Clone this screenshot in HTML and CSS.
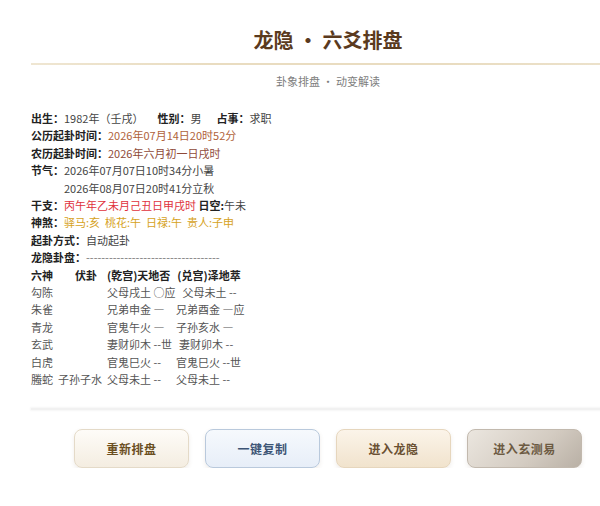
FILE: index.html
```html
<!DOCTYPE html>
<html lang="zh-CN">
<head>
<meta charset="utf-8">
<title>龙隐 · 六爻排盘</title>
<link rel="stylesheet" href="styles.css">
</head>
<body>
<div class="page">
  <header class="head">
    <h1 class="title">龙隐 · 六爻排盘</h1>
    <div class="rule"></div>
    <p class="subtitle">卦象排盘 · 动变解读</p>
  </header>

  <section class="info">
    <div class="line"><b class="lbl">出生：</b><span class="val">1982年（壬戌）</span><b class="lbl gap">性别：</b><span class="val">男</span><b class="lbl gap2">占事：</b><span class="val">求职</span></div>
    <div class="line"><b class="lbl">公历起卦时间：</b><span class="solar">2026年07月14日20时52分</span></div>
    <div class="line"><b class="lbl">农历起卦时间：</b><span class="lunar">2026年六月初一日戌时</span></div>
    <div class="line"><b class="lbl">节气：</b><span class="val">2026年07月07日10时34分小暑</span></div>
    <div class="line indent"><span class="val">2026年08月07日20时41分立秋</span></div>
    <div class="line"><b class="lbl">干支：</b><span class="red">丙午年乙未月己丑日甲戌时</span> <b class="lbl">日空:</b><span class="val">午未</span></div>
    <div class="line"><b class="lbl">神煞：</b><span class="gold">驿马:亥&nbsp; 桃花:午&nbsp; 日禄:午&nbsp; 贵人:子申</span></div>
    <div class="line"><b class="lbl">起卦方式：</b><span class="val">自动起卦</span></div>
    <div class="line"><b class="lbl">龙隐卦盘：</b><span class="dash">-----------------------------------</span></div>

    <div class="grid head-row">
      <span class="c1">六神</span><span class="c2 fu">伏卦</span><span class="c3"><span class="h1x">(乾宫)天地否</span><span>(兑宫)泽地萃</span></span>
    </div>
    <div class="grid row"><span class="c1">勾陈</span><span class="c2"></span><span class="c3"><span class="h1x">父母戌土 ○应</span><span>父母未土 --</span></span></div>
    <div class="grid row"><span class="c1">朱雀</span><span class="c2"></span><span class="c3"><span class="h1x">兄弟申金 —</span><span>兄弟酉金 —应</span></span></div>
    <div class="grid row"><span class="c1">青龙</span><span class="c2"></span><span class="c3"><span class="h1x">官鬼午火 —</span><span>子孙亥水 —</span></span></div>
    <div class="grid row"><span class="c1">玄武</span><span class="c2"></span><span class="c3"><span class="h1x">妻财卯木 --世</span><span>妻财卯木 --</span></span></div>
    <div class="grid row"><span class="c1">白虎</span><span class="c2"></span><span class="c3"><span class="h1x">官鬼巳火 --</span><span>官鬼巳火 --世</span></span></div>
    <div class="grid row"><span class="c1">螣蛇</span><span class="c2">子孙子水</span><span class="c3"><span class="h1x">父母未土 --</span><span>父母未土 --</span></span></div>
  </section>

  <div class="sep"></div>

  <nav class="actions">
    <button class="btn btn-reset">重新排盘</button>
    <button class="btn btn-copy">一键复制</button>
    <button class="btn btn-enter">进入龙隐</button>
    <button class="btn btn-xuan">进入玄测易</button>
  </nav>
</div>
</body>
</html>
```

FILE: styles.css
```css
html, body {
  margin: 0;
  padding: 0;
  background: #ffffff;
  overflow: hidden;
}

body {
  font-family: "Noto Sans CJK SC", "Noto Sans", sans-serif;
  color: #333;
}

.page {
  margin-left: 31px;
  width: 594px;
}

.head {
  padding-top: 26px;
  text-align: center;
}

.title {
  margin: 0;
  font-size: 20px;
  line-height: 28px;
  font-weight: 700;
  color: #5a3a1e;
}

.rule {
  margin-top: 9px;
  height: 2px;
  background: linear-gradient(to right, #efe6d2, #e9dcc0 30%, #e9dcc0 70%, #ece2cc);
}

.subtitle {
  margin: 8px 0 0;
  font-size: 11px;
  line-height: 16px;
  color: #7d7d7d;
}

.info {
  margin-top: 21px;
  font-size: 11px;
  line-height: 17.4px;
  color: #444;
}

.line {
  white-space: nowrap;
}

.indent {
  padding-left: 33px;
}

.lbl {
  font-weight: 700;
  color: #222;
}

.val {
  color: #444;
}

.gap {
  margin-left: 14px;
}

.gap2 {
  margin-left: 15px;
}

.solar {
  color: #b0623a;
}

.lunar {
  color: #8f4a38;
}

.red {
  color: #e0323c;
}

.gold {
  color: #d6a21c;
}

.dash {
  color: #777;
}

.grid {
  display: grid;
  grid-template-columns: 27px 49px auto;
  white-space: nowrap;
}

.head-row {
  font-weight: 700;
  color: #222;
}

.fu {
  padding-left: 17px;
}

.row {
  color: #555;
}

.h1x {
  display: inline-block;
  min-width: 62px;
  margin-right: 7px;
}

.sep {
  margin-top: 19px;
  height: 2px;
  background: #f1f1f1;
  box-shadow: 0 0 2px 1px #f6f6f6;
}

.actions {
  display: flex;
  justify-content: center;
  gap: 16px;
  margin-top: 19px;
}

.btn {
  width: 115px;
  height: 39px;
  border-radius: 8px;
  font-family: "Noto Sans CJK SC", sans-serif;
  font-size: 12px;
  font-weight: 700;
  letter-spacing: 0.5px;
  cursor: pointer;
  padding: 0;
  box-shadow: 0 2px 4px rgba(120, 100, 70, 0.12);
}

.btn-reset {
  background: linear-gradient(to bottom, #fefcf8, #f4ede1);
  border: 1px solid #e4dac8;
  color: #6b4f1f;
}

.btn-copy {
  background: linear-gradient(to bottom, #f6f9fd, #e7eef8);
  border: 1px solid #b9c9dc;
  color: #3c5475;
}

.btn-enter {
  background: linear-gradient(to bottom, #fbf4e9, #f1e3cd);
  border: 1px solid #e6d6bd;
  color: #6a5032;
}

.btn-xuan {
  background: linear-gradient(135deg, #ebe6df, #d3cbc1 60%, #b9b0a5);
  border: 1px solid #c2b9ae;
  color: #6c5a42;
}
```
